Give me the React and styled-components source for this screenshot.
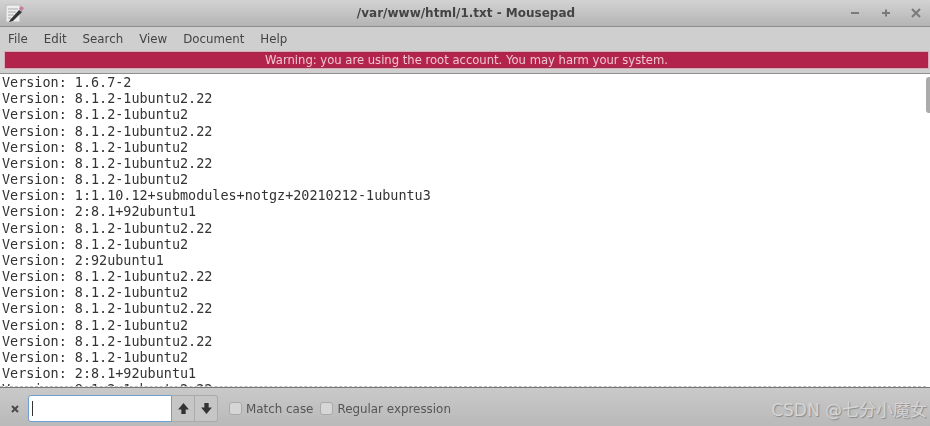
import styled, { createGlobalStyle } from "styled-components";

const GlobalStyle = createGlobalStyle`
  html, body {
    margin: 0;
    padding: 0;
    background: #cdcdcd;
  }
`;

const Window = styled.div`
  position: relative;
  width: 930px;
  height: 426px;
  overflow: hidden;
  background: #cfcfcf;
`;

const Content = styled.div`
  height: 100%;
  display: flex;
  flex-direction: column;
  font-family: "DejaVu Sans", sans-serif;
  color: #3f3f3f;
  filter: blur(0.35px);
`;

const TitleBar = styled.div`
  height: 26px;
  flex: none;
  display: grid;
  grid-template-columns: 1fr auto 1fr;
  align-items: center;
  background: linear-gradient(#d3d3d3, #b4b4b4);
  border-bottom: 1px solid #8e8e8e;
`;

const AppIcon = styled.svg`
  width: 20px;
  height: 20px;
  margin-left: 4px;
  display: block;
`;

const Title = styled.div`
  font-size: 12px;
  font-weight: 700;
  color: #444;
  padding-left: 2px;
`;

const WindowButtons = styled.div`
  display: flex;
  justify-content: flex-end;
  gap: 14.5px;
  padding-right: 6px;
`;

const WindowButton = styled.svg`
  width: 16px;
  height: 16px;
  display: block;
  stroke: #7a7a7a;
  stroke-width: 2;
  fill: none;
`;

const MenuBar = styled.div`
  height: 25px;
  box-sizing: border-box;
  padding: 0 0 2px 8px;
  flex: none;
  display: flex;
  align-items: center;
  gap: 16px;
  background: #cfcfcf;
`;

const MenuItem = styled.span`
  font-size: 11.8px;
  color: #444;
`;

const InfoBar = styled.div`
  height: 16px;
  box-sizing: border-box;
  flex: none;
  margin: 0 2px 0 5px;
  display: flex;
  align-items: center;
  justify-content: center;
  background: #b2244b;
  border: 1px solid #a0294a;
  outline: 1px solid #e0a9b8;
  color: #f0c6d2;
  font-size: 11.6px;
`;

const EditorRow = styled.div`
  margin-top: 5px;
  height: 315px;
  box-sizing: border-box;
  flex: none;
  display: flex;
  background: #fff;
  border-top: 1px solid #8f8f8f;
  border-bottom: 1px solid #777;
`;

const Editor = styled.pre`
  flex: 1;
  margin: 0;
  padding: 1px 0 0 2px;
  overflow: hidden;
  font-family: "DejaVu Sans Mono", monospace;
  font-size: 13.45px;
  line-height: 16.17px;
  color: #333;
  border-bottom: 1px dashed #bbb;
`;

const ScrollTrack = styled.div`
  width: 4px;
  flex: none;
  background: #fff;
`;

const ScrollThumb = styled.div`
  height: 36px;
  margin-top: 3px;
  background: #ababab;
  border-radius: 3px 0 0 3px;
`;

const FindBar = styled.div`
  flex: 1;
  display: flex;
  align-items: center;
  padding: 3px 0 0 10px;
  background: linear-gradient(#c9c9c9, #b9b9b9);
  font-size: 11.9px;
`;

const CloseIcon = styled.svg`
  width: 10px;
  height: 10px;
  margin-right: 8px;
  stroke: #4a4a4a;
  stroke-width: 2;
`;

const SearchInput = styled.div`
  width: 144px;
  height: 27px;
  box-sizing: border-box;
  display: flex;
  align-items: center;
  padding-left: 3px;
  background: #fff;
  border: 1px solid #6f9fd0;
  border-radius: 3px 0 0 3px;
`;

const Caret = styled.div`
  width: 1px;
  height: 15px;
  background: #333;
`;

const ArrowButton = styled.div`
  width: 23px;
  height: 27px;
  box-sizing: border-box;
  display: flex;
  align-items: center;
  justify-content: center;
  background: #c6c6c6;
  border: 1px solid #aaa;
  border-left: none;
  border-radius: ${(props) => (props.$last ? "0 3px 3px 0" : "0")};
`;

const ArrowIcon = styled.svg`
  width: 13px;
  height: 13px;
  fill: #333;
`;

const CheckLabel = styled.label`
  display: flex;
  align-items: center;
  gap: 4px;
  margin-left: ${(props) => props.$gap}px;
  color: #555;
`;

const CheckBox = styled.span`
  width: 13px;
  height: 13px;
  box-sizing: border-box;
  background: #d6d6d6;
  border: 1px solid #a9a9a9;
  border-radius: 3px;
`;

const Watermark = styled.div`
  position: absolute;
  right: 3px;
  bottom: 5px;
  font-family: "DejaVu Sans", "Noto Sans CJK SC", sans-serif;
  font-size: 17px;
  color: #d5d5d5;
  text-shadow: 1px 1px 1px #8a8a8a;
`;

const lines = [
  "Version: 1.6.7-2",
  "Version: 8.1.2-1ubuntu2.22",
  "Version: 8.1.2-1ubuntu2",
  "Version: 8.1.2-1ubuntu2.22",
  "Version: 8.1.2-1ubuntu2",
  "Version: 8.1.2-1ubuntu2.22",
  "Version: 8.1.2-1ubuntu2",
  "Version: 1:1.10.12+submodules+notgz+20210212-1ubuntu3",
  "Version: 2:8.1+92ubuntu1",
  "Version: 8.1.2-1ubuntu2.22",
  "Version: 8.1.2-1ubuntu2",
  "Version: 2:92ubuntu1",
  "Version: 8.1.2-1ubuntu2.22",
  "Version: 8.1.2-1ubuntu2",
  "Version: 8.1.2-1ubuntu2.22",
  "Version: 8.1.2-1ubuntu2",
  "Version: 8.1.2-1ubuntu2.22",
  "Version: 8.1.2-1ubuntu2",
  "Version: 2:8.1+92ubuntu1",
  "Version: 8.1.2-1ubuntu2.22",
];

const menus = ["File", "Edit", "Search", "View", "Document", "Help"];

const App = () => {
  return (
    <Window>
      <GlobalStyle />
      <Content>
        <TitleBar>
          <AppIcon viewBox="0 0 20 20">
            <rect x="2" y="2" width="14" height="17" fill="#eee" stroke="#bbb" />
            <path d="M4 6h10M4 9h8M4 12h6M4 15h3" stroke="#aaa" />
            <path d="M6 17l9-10 3 2-9 9-4 1z" fill="#333" />
            <path d="M15 6l2-3 3 2-2 3z" fill="#c77aa0" />
          </AppIcon>
          <Title>/var/www/html/1.txt - Mousepad</Title>
          <WindowButtons>
            <WindowButton viewBox="0 0 16 16">
              <path d="M4 8h8" />
            </WindowButton>
            <WindowButton viewBox="0 0 16 16">
              <path d="M4 8h8M8 4.5v7" />
            </WindowButton>
            <WindowButton viewBox="0 0 16 16">
              <path d="M4 4l8 8M12 4l-8 8" />
            </WindowButton>
          </WindowButtons>
        </TitleBar>
        <MenuBar>
          {menus.map((menu) => (
            <MenuItem key={menu}>{menu}</MenuItem>
          ))}
        </MenuBar>
        <InfoBar>Warning: you are using the root account. You may harm your system.</InfoBar>
        <EditorRow>
          <Editor>{lines.join("\n")}</Editor>
          <ScrollTrack>
            <ScrollThumb />
          </ScrollTrack>
        </EditorRow>
        <FindBar>
          <CloseIcon viewBox="0 0 10 10">
            <path d="M2 2l6 6M8 2l-6 6" />
          </CloseIcon>
          <SearchInput>
            <Caret />
          </SearchInput>
          <ArrowButton>
            <ArrowIcon viewBox="0 0 12 12">
              <path d="M6 1l5 6H8v4H4V7H1z" />
            </ArrowIcon>
          </ArrowButton>
          <ArrowButton $last>
            <ArrowIcon viewBox="0 0 12 12">
              <path d="M6 11L1 5h3V1h4v4h3z" />
            </ArrowIcon>
          </ArrowButton>
          <CheckLabel $gap={11}>
            <CheckBox />
            Match case
          </CheckLabel>
          <CheckLabel $gap={7}>
            <CheckBox />
            Regular expression
          </CheckLabel>
        </FindBar>
      </Content>
      <Watermark>CSDN @七分小魔女</Watermark>
    </Window>
  );
};

export default App;
